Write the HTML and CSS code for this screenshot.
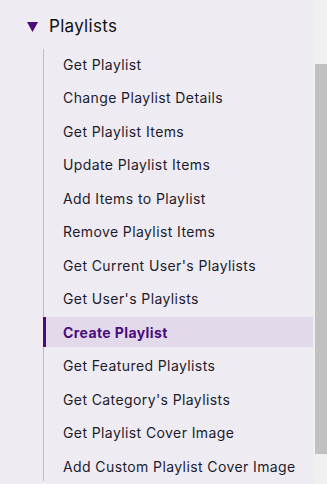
FILE: index.html
```html
<!DOCTYPE html>
<html lang="en">

<head>
    <meta charset="UTF-8">
    <meta name="viewport" content="width=device-width, initial-scale=1.0">
    <title>Playlists</title>
    <link rel="stylesheet" href="styles.css">
</head>

<body>
    <div class="page">
        <nav class="sidebar">
            <div class="section-title">
                <svg class="caret" width="11" height="10" viewBox="0 0 11 10">
                    <polygon points="0,0 11,0 5.5,10" />
                </svg>
                <span>Playlists</span>
            </div>
            <ul class="endpoints">
                <li><a href="#">Get Playlist</a></li>
                <li><a href="#">Change Playlist Details</a></li>
                <li><a href="#">Get Playlist Items</a></li>
                <li><a href="#">Update Playlist Items</a></li>
                <li><a href="#">Add Items to Playlist</a></li>
                <li><a href="#">Remove Playlist Items</a></li>
                <li><a href="#">Get Current User's Playlists</a></li>
                <li><a href="#">Get User's Playlists</a></li>
                <li class="active"><a href="#">Create Playlist</a></li>
                <li><a href="#">Get Featured Playlists</a></li>
                <li><a href="#">Get Category's Playlists</a></li>
                <li><a href="#">Get Playlist Cover Image</a></li>
                <li><a href="#">Add Custom Playlist Cover Image</a></li>
            </ul>
        </nav>
        <div class="scrollbar">
            <div class="thumb"></div>
        </div>
    </div>
</body>

</html>
```

FILE: styles.css
```css
body {
    margin: 0;
    padding: 0;
    font-family: Inter, "Noto Sans", sans-serif;
    background-color: #eeebf3;
}

.page {
    display: flex;
    height: 484px;
    overflow: hidden;
}

.sidebar {
    width: 313px;
    background-color: #eeebf3;
}

.section-title {
    display: flex;
    align-items: center;
    gap: 11px;
    padding: 15px 0 0 27px;
    height: 22px;
    font-size: 17px;
    letter-spacing: 0.3px;
    color: #111;
}

.caret {
    fill: #4a0c7d;
    margin-top: 1px;
}

.endpoints {
    list-style: none;
    margin: 13px 0 0 43px;
    padding: 0;
    border-left: 1px solid #c5b8dc;
}

.endpoints li {
    height: 30px;
    margin-bottom: 3.5px;
    display: flex;
    align-items: center;
    border-left: 2px solid transparent;
    margin-left: -1px;
}

.endpoints li:first-child {
    margin-top: -1px;
}

.endpoints li a {
    padding-left: 18px;
    font-size: 14px;
    letter-spacing: 0.4px;
    color: #1c1c2c;
    text-decoration: none;
}

.endpoints li.active {
    background-color: #e2daeb;
    border-left: 3px solid #4a0c7d;
}

.endpoints li.active a {
    padding-left: 17px;
    font-weight: bold;
    color: #4a0c7d;
}

.scrollbar {
    width: 14px;
    background-color: #f0f0f0;
    display: flex;
    justify-content: flex-end;
}

.thumb {
    width: 12px;
    height: 390px;
    margin-top: 64px;
    background-color: #c1c1c1;
}
```
